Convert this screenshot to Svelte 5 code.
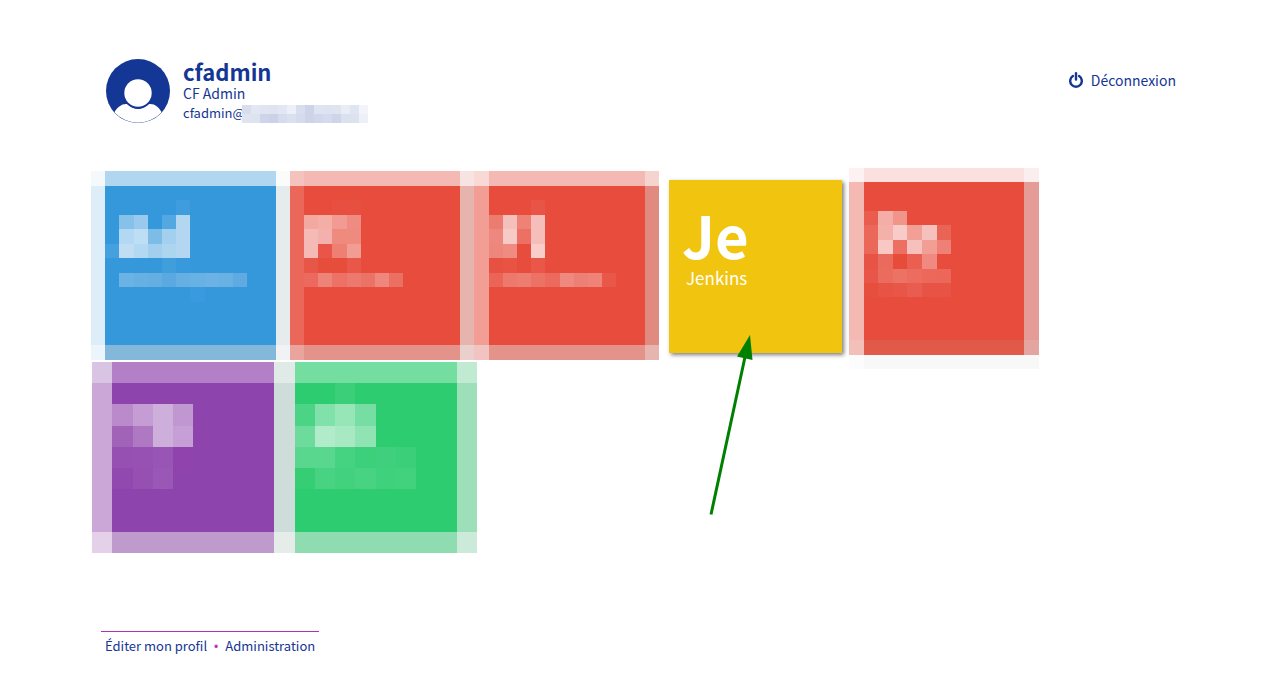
<script>
  // Each cell is [x, y, width, height, colour] in the coordinates of the tile board.
  const blue = {
    box: '91 168 199 194', width: 199,
    cells: [
      [91,171,14,15,'#f4f9fc'],[105,171,171,15,'#b0d6f0'],[276,171,14,15,'#fafcfb'],
      [91,186,14,159,'#deeef8'],[105,186,171,159,'#3498db'],[276,186,14,159,'#e6ebee'],
      [91,345,14,15,'#ecf5fb'],[105,345,171,15,'#84b8db'],[276,345,14,15,'#f1f2f4'],
      [176,200,14,15,'#3f9ddd'],
      [119,215,15,14,'#86c1ea'],[134,215,14,14,'#99c9ec'],[162,215,14,14,'#53a8e2'],
      [176,215,14,43,'#b3d6f1'],
      [119,229,15,15,'#b3d8f3'],[134,229,14,15,'#bedef5'],[148,229,14,15,'#7cbce7'],[162,229,14,15,'#a3d0ef'],
      [105,244,14,14,'#45a0df'],[119,244,15,14,'#c0ddf4'],[134,244,14,14,'#b1d9f1'],[148,244,14,14,'#a3cfee'],[162,244,14,14,'#acd5f0'],
      [162,258,14,15,'#409edd'],[176,258,14,15,'#389adc'],
      [119,273,15,14,'#6bb3e4'],[134,273,14,14,'#67b1e2'],[148,273,14,14,'#64afe2'],[162,273,14,14,'#5ba9e1'],
      [176,273,14,14,'#65afe2'],[190,273,15,14,'#67b1e3'],[205,273,14,14,'#6cb2e5'],[219,273,14,14,'#68b1e3'],[233,273,14,14,'#5eaae1'],
      [190,287,15,15,'#3a9adf']
    ]
  };
  const redA = {
    box: '290 168 184 194', width: 184,
    cells: [
      [290,171,14,15,'#f5c3be'],[304,171,156,15,'#f4b9b3'],[460,171,14,15,'#f7e3e1'],
      [290,186,14,159,'#eb6759'],[304,186,156,159,'#e84c3d'],[460,186,14,159,'#e6b3ad'],
      [290,345,14,15,'#eaa49e'],[304,345,156,15,'#e39389'],[460,345,14,15,'#eacfcc'],
      [332,200,29,15,'#e74f40'],
      [304,215,14,14,'#f3a8a0'],[318,215,14,14,'#f5aea6'],[332,215,15,14,'#f29b92'],[347,215,14,14,'#ef8b80'],
      [304,229,14,29,'#f5bab5'],[318,229,14,15,'#f4b0ac'],[332,229,29,15,'#ef8a7f'],
      [318,244,14,14,'#e95548'],[332,244,15,14,'#ed7f73'],[347,244,14,14,'#f29d94'],
      [304,258,14,15,'#e85648'],[318,258,29,15,'#e74d3b'],[347,258,14,15,'#e85748'],
      [304,273,14,14,'#eb695e'],[318,273,14,14,'#ee8378'],[332,273,15,14,'#ed7166'],[347,273,14,14,'#ed786d'],
      [361,273,14,14,'#eb7266'],[375,273,14,14,'#ef877c'],[389,273,14,14,'#ea7064']
    ]
  };
  const redB = {
    box: '474 168 185 194', width: 185,
    cells: [
      [474,171,15,15,'#f8d9d6'],[489,171,156,15,'#f4b9b3'],[645,171,14,15,'#f5d3cf'],
      [474,186,15,159,'#f29e94'],[489,186,156,159,'#e84c3d'],[645,186,14,159,'#e08a80'],
      [474,345,15,15,'#f1c4c1'],[489,345,156,15,'#e39389'],[645,345,14,15,'#e6b5b0'],
      [531,200,14,15,'#e85547'],
      [489,215,14,14,'#ec7b70'],[503,215,14,14,'#f5c0bb'],[517,215,14,14,'#ef8277'],[531,215,14,29,'#f5beb9'],
      [489,229,14,15,'#ee877d'],[503,229,14,15,'#f8cac6'],[517,229,14,15,'#ec7063'],
      [489,244,14,14,'#ed867b'],[503,244,14,14,'#ef8b81'],[531,244,14,14,'#f9cdca'],
      [489,258,14,15,'#e75142'],[503,258,14,15,'#e85344'],[531,258,14,15,'#e85748'],
      [489,273,14,14,'#ea6558'],[503,273,14,14,'#ed796d'],[517,273,14,14,'#ee7d71'],[531,273,14,14,'#ec7266'],[545,273,15,14,'#eb695d'],
      [560,273,14,14,'#ef887e'],[574,273,14,14,'#ed8074'],[588,273,14,14,'#ef8379'],[602,273,14,14,'#e85748']
    ]
  };
  const redC = {
    box: '849 168 190 194', width: 190,
    cells: [
      [849,168,15,14,'#fdf2f1'],[864,168,160,14,'#fbe0df'],[1024,168,15,14,'#fbeeee'],
      [849,182,15,158,'#f4b9b3'],[864,182,160,158,'#e84c3d'],[1024,182,15,158,'#e59c96'],
      [849,340,15,15,'#f2c0b9'],[864,340,160,15,'#e15948'],[1024,340,15,15,'#e4a49f'],
      [849,355,15,14,'#fcfcfc'],[864,355,175,14,'#f9f8f8'],
      [864,211,14,14,'#ea5c4e'],[878,211,15,14,'#f4aea7'],[893,211,14,14,'#f0958a'],
      [864,225,14,29,'#eb675a'],[878,225,15,15,'#f4b1a9'],[893,225,14,15,'#f8cbc8'],[907,225,15,15,'#f29f96'],[922,225,15,15,'#f6c0bc'],[937,225,14,15,'#ea6456'],
      [878,240,15,14,'#f8c8c4'],[893,240,14,14,'#ec6f62'],[907,240,15,14,'#f6c1bd'],[922,240,15,14,'#f29e94'],[937,240,14,14,'#ee8075'],
      [864,254,14,15,'#e75446'],[878,254,15,15,'#eb6a5e'],[893,254,14,15,'#e74b3a'],[907,254,15,15,'#ea5f52'],[922,254,15,15,'#f08a80'],
      [864,269,14,14,'#e75648'],[878,269,15,14,'#eb6b5e'],[893,269,14,14,'#ec7264'],[907,269,15,14,'#ec6d60'],[922,269,15,14,'#eb685b'],[937,269,14,14,'#ec6659'],
      [864,283,14,14,'#e64e3e'],[878,283,15,14,'#e75344'],[893,283,14,14,'#e75647'],[907,283,15,14,'#e85d4f'],[922,283,29,14,'#e75446']
    ]
  };
  const purple = {
    box: '91 362 183 191', width: 183,
    cells: [
      [92,362,20,21,'#dac4e4'],[112,362,162,21,'#b37fc6'],
      [92,383,20,149,'#cba7d8'],[112,383,162,149,'#8e44ad'],
      [92,532,20,21,'#e4d1e9'],[112,532,162,21,'#bf9acc'],
      [112,404,21,22,'#ba8aca'],[133,404,20,22,'#c59cd4'],[153,404,20,43,'#ceaedb'],[173,404,20,22,'#c197d2'],
      [112,426,21,21,'#a163b8'],[133,426,20,21,'#ae78c2'],[173,426,20,21,'#c69fd6'],
      [112,447,21,21,'#9650b2'],[133,447,20,21,'#9651b3'],[153,447,20,21,'#9955b5'],[173,447,20,21,'#9042ad'],
      [112,468,21,21,'#9149af'],[133,468,20,21,'#9650b2'],[153,468,20,21,'#9b57b6']
    ]
  };
  const green = {
    box: '274 362 203 191', width: 203,
    cells: [
      [274,362,21,21,'#e0eae7'],[295,362,162,21,'#73dea0'],[457,362,20,21,'#c0ead2'],
      [274,383,21,149,'#cfddda'],[295,383,162,149,'#2ecc71'],[457,383,20,149,'#9ddfb9'],
      [274,532,21,21,'#e6ecea'],[295,532,162,21,'#90dcb1'],[457,532,20,21,'#cceada'],
      [335,383,20,21,'#3acf78'],
      [295,404,20,22,'#4bd486'],[315,404,20,22,'#80e1aa'],[335,404,20,22,'#96e6b8'],[355,404,21,22,'#76dea3'],
      [295,426,20,21,'#6ddb9c'],[315,426,20,21,'#b0ecca'],[335,426,20,21,'#a6e9c3'],[355,426,21,21,'#90e4b4'],
      [295,447,40,21,'#5ad78f'],[335,447,20,21,'#45d281'],[355,447,21,21,'#3dd07a'],[376,447,20,21,'#40d07d'],[396,447,20,21,'#3acf78'],
      [295,468,20,21,'#35ce75'],[315,468,20,21,'#47d382'],[335,468,20,21,'#42d27e'],[355,468,21,21,'#48d383'],[376,468,20,21,'#40d17c'],[396,468,20,21,'#42d27e']
    ]
  };

  const maskRows = [
    ['#d8deed','#e3e6f3','#e1e5f2','#dfe4f1','#e4e7f3','#edf0f8','#d8deee','#cdd3e8','#dee4f1','#dee3f0','#dfe4f1','#eaecf6','#dfe5f2','#f3f4fa'],
    ['#e0e4f1','#dde3ef','#ced4e9','#cbd1e7','#d6dbed','#dbe0ef','#d5dbef','#ced4e8','#d2d8ec','#d5daee','#ced4e9','#dbe1ef','#dce3ef','#edf0f9']
  ];
</script>

{#snippet tile(t, name)}
  <a class="tile" href="#{name}" aria-label={name}>
    <svg viewBox={t.box} width={t.width} shape-rendering="crispEdges" aria-hidden="true">
      {#each t.cells as [x, y, w, h, fill]}
        <rect {x} {y} width={w} height={h} {fill} />
      {/each}
    </svg>
  </a>
{/snippet}

<div class="page">
  <header>
    <div class="user">
      <svg class="avatar" viewBox="0 0 64 64" aria-hidden="true">
        <defs><clipPath id="disc"><circle cx="32" cy="32" r="31.7" /></clipPath></defs>
        <circle cx="32" cy="32" r="32" fill="#143694" />
        <g clip-path="url(#disc)" fill="#fff">
          <path d="M8 54C11 48 16 44.5 21 45Q32 55 43 45C49 44.500 53 48 56 54L58 66H6Z" />
        </g>
        <circle cx="32" cy="34" r="15.500" fill="#143694" />
        <circle cx="32" cy="34" r="13.700" fill="#fff" />
      </svg>
      <div class="identity">
        <h1>cfadmin</h1>
        <p class="name">CF Admin</p>
        <p class="mail">
          <span>cfadmin@</span>
          <svg class="mask" viewBox="0 0 126 18" shape-rendering="crispEdges" aria-hidden="true">
            {#each maskRows as row, r}
              {#each row as fill, c}
                <rect x={c * 9} y={r * 9} width="9" height="9" {fill} />
              {/each}
            {/each}
          </svg>
        </p>
      </div>
    </div>
    <a class="logout" href="#logout">
      <svg viewBox="0 0 14 16" aria-hidden="true">
        <path d="M3.900 4A5.800 5.800 0 1 0 10.100 4" fill="none" stroke="#143694" stroke-width="2.400" stroke-linecap="round" />
        <path d="M7 1.200V7.500" stroke="#143694" stroke-width="2.400" stroke-linecap="round" />
      </svg>
      Déconnexion
    </a>
  </header>

  <main>
    {@render tile(blue, 'application-1')}
    {@render tile(redA, 'application-2')}
    {@render tile(redB, 'application-3')}
    <div class="pointed">
      <a class="jenkins" href="#jenkins">
        <span class="symbol">Je</span>
        <span class="label">Jenkins</span>
      </a>
      <svg class="arrow" viewBox="700 330 60 190" aria-hidden="true">
        <path d="M711 514.500L745 357" stroke="#008000" stroke-width="3" />
        <path d="M750 335L737 356.500L752.500 360Z" fill="#008000" />
      </svg>
    </div>
    {@render tile(redC, 'application-4')}
    {@render tile(purple, 'application-5')}
    {@render tile(green, 'application-6')}
  </main>

  <footer>
    <a href="#profile">Éditer mon profil</a>
    <span class="dot">•</span>
    <a href="#administration">Administration</a>
  </footer>
</div>

<style>
  :global(body) { margin: 0; background: #fff; }
  .page {
    padding: 59px 102px 16px 91px;
    font-family: "Noto Sans CJK SC", "Noto Sans", sans-serif;
    color: #143694;
  }
  a { color: inherit; text-decoration: none; }
  header {
    display: flex;
    justify-content: space-between;
    align-items: flex-start;
    padding-left: 15px;
  }
  .user { display: flex; gap: 13px; }
  .avatar { width: 64px; height: 64px; }
  h1, p { margin: 0; font-weight: 400; }
  h1 { font-size: 22px; line-height: 24px; font-weight: 700; }
  .name { font-size: 14px; line-height: 20px; }
  .mail { display: flex; align-items: flex-start; font-size: 13px; line-height: 16px; margin-top: 2px; }
  .mail span { width: 59px; }
  .mask { width: 126px; height: 18px; position: relative; }
  .logout {
    display: flex;
    align-items: center;
    gap: 8px;
    margin-top: 11px;
    font-size: 14px;
    line-height: 20px;
  }
  .logout svg { width: 14px; height: 16px; }
  main {
    display: flex;
    flex-wrap: wrap;
    align-items: flex-start;
    margin-top: 45px;
  }
  .tile, .tile svg { display: block; }
  .tile svg { overflow: visible; }
  .pointed { position: relative; margin: 12px 7px 9px 10px; }
  .jenkins {
    display: flex;
    flex-direction: column;
    box-sizing: border-box;
    width: 173px;
    height: 173px;
    padding: 24px 13px;
    background: #f1c40f;
    color: #fff;
    box-shadow: 2px 2px 4px rgba(0, 0, 0, 0.5);
  }
  .symbol { font-size: 58px; line-height: 60px; font-weight: 700; }
  .label { padding-left: 4px; font-size: 17px; line-height: 28px; }
  .arrow { position: absolute; left: 31px; top: 150px; width: 60px; height: 190px; z-index: 1; pointer-events: none; }
  footer {
    display: flex;
    gap: 7px;
    width: fit-content;
    margin: 78px 0 0 10px;
    padding: 4px 4px 0;
    border-top: 1px solid #b52fb5;
    font-size: 13px;
    line-height: 20px;
  }
  .dot { color: #c033c0; font-family: "Liberation Sans", sans-serif; font-size: 12px; line-height: 22px; }
</style>
